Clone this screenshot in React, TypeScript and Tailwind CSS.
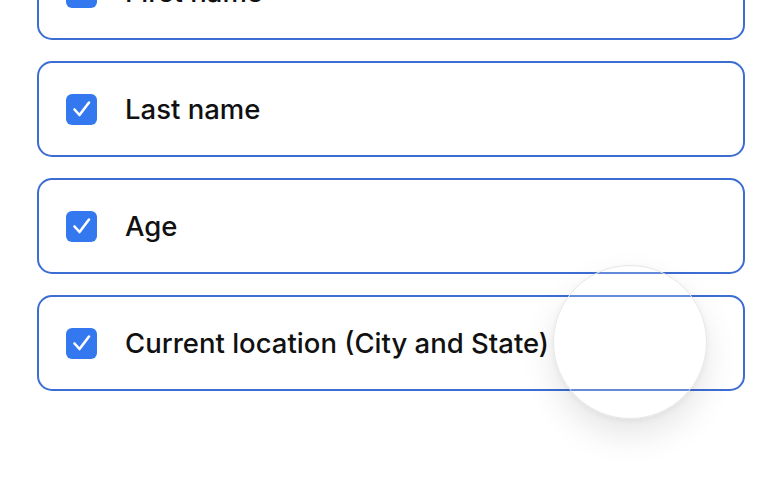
import React from "react";

const items = ["First name", "Last name", "Age", "Current location (City and State)"];

function Check() {
  return (
    <div className="w-[31px] h-[31px] rounded-[6px] bg-[#3478f0] flex items-center justify-center shrink-0">
      <svg width="24" height="24" viewBox="0 0 24 24" fill="none">
        <path d="M4.5 12.5 L9.5 18 L19 5.5" stroke="white" strokeWidth="2.6" strokeLinecap="round" strokeLinejoin="round" />
      </svg>
    </div>
  );
}

export default function App() {
  return (
    <div className="relative w-[768px] h-[480px] overflow-hidden bg-white" style={{ fontFamily: "Inter, 'Noto Sans', sans-serif" }}>
      <div className="flex flex-col gap-[21px] pl-[37px] pr-[23px] mt-[-56px]">
        {items.map((t) => (
          <div key={t} className="shrink-0 h-[96px] rounded-[15px] border-2 border-[#3c6dd3] bg-white flex items-center pl-[27px] gap-[28px]">
            <Check />
            <span className="mt-[2px] text-[27.5px] font-[450] text-[#111] leading-none">{t}</span>
          </div>
        ))}
      </div>
      <div className="absolute left-[553px] top-[265px] w-[154px] h-[154px] rounded-full bg-white/20 border border-[#e6e6e6] shadow-[0_16px_34px_rgba(0,0,0,0.10),0_2px_6px_rgba(0,0,0,0.05)]" />
    </div>
  );
}
